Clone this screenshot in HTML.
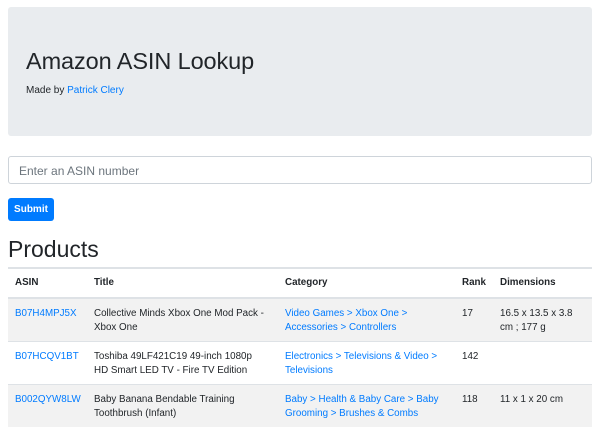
<!DOCTYPE html>
<html><head><meta charset="utf-8"><style>
*{box-sizing:border-box;margin:0;padding:0}
body{width:600px;height:437px;background:#fff;font-family:"Liberation Sans",Arial,sans-serif;color:#212529;position:relative;overflow:hidden}
.jumbo{position:absolute;left:8px;top:7px;width:584px;height:129px;background:#e9ecef;border-radius:3px}
.jumbo h1{position:absolute;left:18px;top:41px;font-size:23.5px;font-weight:400;letter-spacing:-0.1px}
.jumbo p{position:absolute;left:18px;top:78px;font-size:10px}
a{color:#007bff;text-decoration:none}
.inp{position:absolute;left:8px;top:156px;width:584px;height:28px;border:1px solid #ced4da;border-radius:3px;font-size:12px;color:#6c757d;padding:7px 10px}
.btn{position:absolute;left:8px;top:198px;width:46px;height:23px;background:#007bff;border-radius:3px;color:#fff;font-size:10px;font-weight:bold;text-align:center;line-height:24px}
h2{position:absolute;left:8px;top:236px;font-size:23px;font-weight:400}
table{position:absolute;left:8px;top:267px;width:584px;border-collapse:collapse;font-size:9.8px;table-layout:fixed}
td,th{padding:8px 7px 0 7px;text-align:left;vertical-align:top;line-height:14px;border-top:1px solid #dee2e6}
th{height:30px;padding-top:7px;font-weight:bold;border-top:2px solid #dee2e6;border-bottom:2px solid #dee2e6}
td{height:43px}
tr.s td{background:#f2f2f2}
</style></head><body>
<div class="jumbo"><h1>Amazon ASIN Lookup</h1><p>Made by <a>Patrick Clery</a></p></div>
<div class="inp">Enter an ASIN number</div>
<div class="btn">Submit</div>
<h2>Products</h2>
<table>
<colgroup><col style="width:79px"><col style="width:191px"><col style="width:177px"><col style="width:38px"><col style="width:99px"></colgroup>
<tr><th>ASIN</th><th>Title</th><th>Category</th><th>Rank</th><th>Dimensions</th></tr>
<tr class="s"><td><a>B07H4MPJ5X</a></td><td>Collective Minds Xbox One Mod Pack -<br>Xbox One</td><td><a>Video Games &gt; Xbox One &gt;<br>Accessories &gt; Controllers</a></td><td>17</td><td>16.5 x 13.5 x 3.8<br>cm ; 177 g</td></tr>
<tr><td><a>B07HCQV1BT</a></td><td>Toshiba 49LF421C19 49-inch 1080p<br>HD Smart LED TV - Fire TV Edition</td><td><a>Electronics &gt; Televisions &amp; Video &gt;<br>Televisions</a></td><td>142</td><td></td></tr>
<tr class="s"><td><a>B002QYW8LW</a></td><td>Baby Banana Bendable Training<br>Toothbrush (Infant)</td><td><a>Baby &gt; Health &amp; Baby Care &gt; Baby<br>Grooming &gt; Brushes &amp; Combs</a></td><td>118</td><td>11 x 1 x 20 cm</td></tr>
</table>
</body></html>
